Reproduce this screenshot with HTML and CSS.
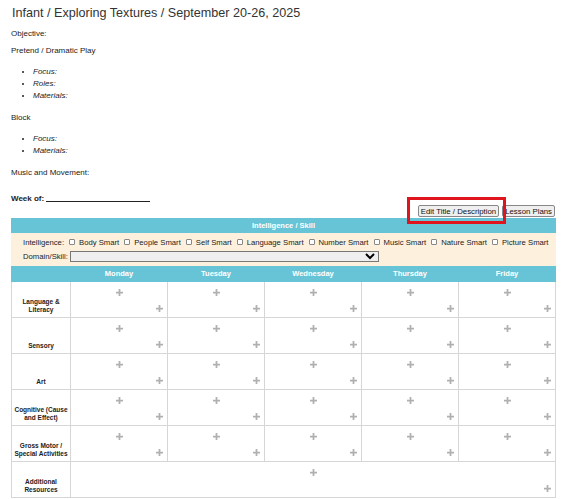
FILE: index.html
```html
<!DOCTYPE html>
<html lang="en">
<head>
  <meta charset="UTF-8" />
  <title>Lesson Plan</title>
  <link rel="stylesheet" href="styles.css">
</head>
<body>
  <h1 class="title">Infant / Exploring Textures / September 20-26, 2025</h1>
  <p>Objective:</p>
  <p>Pretend / Dramatic Play</p>
  <ul>
    <li><em>Focus:</em></li>
    <li><em>Roles:</em></li>
    <li><em>Materials:</em></li>
  </ul>
  <p>Block</p>
  <ul>
    <li><em>Focus:</em></li>
    <li><em>Materials:</em></li>
  </ul>
  <p>Music and Movement:</p>
  <p class="week"><b>Week of:</b> <span class="blank"></span></p>

  <div class="actions">
    <button class="btn">Edit Title / Description</button>
    <button class="btn">Lesson Plans</button>
    <span class="highlight"></span>
  </div>

  <table class="plan">
    <colgroup>
      <col class="label-col">
      <col><col><col><col><col>
    </colgroup>
    <tr>
      <th colspan="6" class="bar">Intelligence / Skill</th>
    </tr>
    <tr>
      <td colspan="6" class="skills">
        <div class="skill-line">
          Intelligence:
          <label><input type="checkbox"> Body Smart</label>
          <label><input type="checkbox"> People Smart</label>
          <label><input type="checkbox"> Self Smart</label>
          <label><input type="checkbox"> Language Smart</label>
          <label><input type="checkbox"> Number Smart</label>
          <label><input type="checkbox"> Music Smart</label>
          <label><input type="checkbox"> Nature Smart</label>
          <label><input type="checkbox"> Picture Smart</label>
        </div>
        <div class="skill-line">
          Domain/Skill: <select class="domain"><option></option></select>
        </div>
      </td>
    </tr>
    <tr class="days">
      <th class="bar"></th>
      <th class="bar">Monday</th>
      <th class="bar">Tuesday</th>
      <th class="bar">Wednesday</th>
      <th class="bar">Thursday</th>
      <th class="bar">Friday</th>
    </tr>
    <tbody id="rows"></tbody>
  </table>

  <script>
    const labels = ["Language &amp; Literacy", "Sensory", "Art", "Cognitive (Cause and Effect)", "Gross Motor / Special Activities"];
    const plus = '<svg class="plus" viewBox="0 0 8 8"><path d="M3 0h2v3h3v2H5v3H3V5H0V3h3z"/></svg>';
    const cell = `<div class="cell"><span class="top">${plus}</span><span class="bottom">${plus}</span></div>`;
    const rows = document.getElementById("rows");

    labels.forEach(label => {
      const tr = document.createElement("tr");
      tr.innerHTML = `<th class="label">${label}</th>` + `<td>${cell}</td>`.repeat(5);
      rows.appendChild(tr);
    });

    const last = document.createElement("tr");
    last.innerHTML = `<th class="label">Additional Resources</th><td colspan="5">${cell}</td>`;
    rows.appendChild(last);
  </script>
</body>
</html>
```

FILE: styles.css
```css
* { box-sizing: border-box; }
body {
  font-family: "Liberation Sans", Arial, sans-serif;
  font-size: 8px;
  color: #222;
  margin: 0;
  padding: 4px 11px;
  background: #fff;
}
.title {
  font-size: 12.6px;
  font-weight: normal;
  line-height: 18px;
  margin: 0 0 4px 1px;
  color: #333;
}
p {
  margin: 6px 0;
  line-height: 11px;
}
ul {
  margin: 10px 0;
  padding-left: 22px;
}
li {
  line-height: 12px;
}
.week {
  margin: 15px 0 0;
}
.blank {
  display: inline-block;
  width: 104px;
  border-bottom: 1px solid #222;
  vertical-align: -1px;
}
.actions {
  position: relative;
  display: flex;
  justify-content: flex-end;
  gap: 3px;
  margin: 0 2px 0 0;
  height: 14px;
  align-items: center;
}
.btn {
  font-family: "Liberation Sans", Arial, sans-serif;
  font-size: 7.8px;
  padding: 1px 2px;
  height: 12px;
  line-height: 9px;
  background: #efefef;
  border: 1px solid #888;
  border-radius: 2px;
  color: #111;
}
.highlight {
  position: absolute;
  right: 49px;
  top: -7px;
  width: 99px;
  height: 27px;
  border: 3px solid #e0141c;
}
.plan {
  width: 545px;
  border-collapse: collapse;
  table-layout: fixed;
}
.label-col {
  width: 59px;
}
.plan td, .plan th {
  border: 1px solid #d6d6d6;
  padding: 0;
}
.bar {
  background: #66c4d6;
  color: #fff;
  font-weight: bold;
  font-size: 7.5px;
  height: 14px;
  text-align: center;
  border-color: #66c4d6 !important;
}
.days .bar {
  height: 16px;
}
.skills {
  background: #fdf1dd;
  padding: 2px 10px 2px 11px !important;
  border-color: #fdf1dd !important;
}
.skill-line {
  display: flex;
  align-items: center;
  gap: 5px;
  height: 14px;
  font-size: 7.7px;
  white-space: nowrap;
}
.skill-line label {
  display: flex;
  align-items: center;
  gap: 4px;
}
.skill-line input {
  appearance: none;
  width: 6px;
  height: 6px;
  margin: 0;
  border: 1px solid #888;
  border-radius: 1px;
  background: #fff;
}
.domain {
  width: 309px;
  height: 11px;
  font-size: 7px;
  margin-left: -3px;
  border: 1px solid #777;
  padding: 0;
}
.label {
  font-size: 6.5px;
  font-weight: bold;
  text-align: center;
  vertical-align: bottom;
  padding: 0 2px 3px !important;
  line-height: 8px;
  color: #222;
}
.cell {
  display: flex;
  flex-direction: column;
  justify-content: space-between;
  height: 35px;
  padding: 7px 4px 5px;
}
.top {
  align-self: center;
  display: flex;
}
.bottom {
  align-self: flex-end;
  display: flex;
}
.plus {
  width: 7px;
  height: 7px;
  fill: #b0b0b0;
}
```
